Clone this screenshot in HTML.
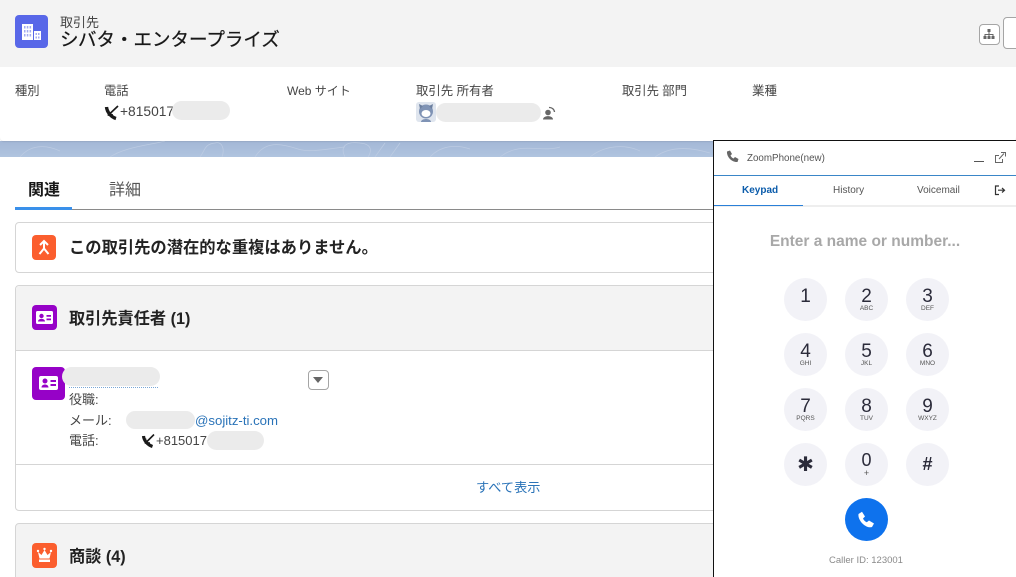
<!DOCTYPE html>
<html lang="ja"><head><meta charset="utf-8">
<style>
html,body{margin:0;padding:0;width:1016px;height:577px;overflow:hidden;background:#fff}
body{font-family:"Liberation Sans","Noto Sans CJK JP",sans-serif;color:#444;position:relative}
.a{position:absolute;white-space:nowrap}
.blur{position:absolute;background:#ebebeb;border-radius:11px}
.key{position:absolute;width:43px;height:43px;border-radius:50%;background:#f2f2f7;text-align:center;color:#2b2b3a}
.key .n{position:absolute;left:0;right:0;top:9px;font-size:19px;line-height:22px}
.key .s{position:absolute;left:0;right:0;top:27px;font-size:6.500px;line-height:7px;color:#555}
.ic{position:absolute;border-radius:4px}
.l{font-size:12.300px;line-height:18px}
</style></head><body>
<!-- header -->
<div class="a" style="left:0;top:0;width:1016px;height:67px;background:#f3f3f3"></div>
<div class="a" style="left:0;top:141px;width:1016px;height:16px;background:linear-gradient(#a3b7d6,#b0c4df)"></div>
<svg class="a" style="left:0;top:141px" width="714" height="16" fill="none" stroke="#bccbe2" stroke-width=".8"><path d="M20 16C30 4 45 3 60 10M110 16C125 6 150 4 165 0M200 16C205 10 204 3 215 2C222 0 225 8 222 16M255 16C265 0 280 2 298 8C310 12 325 8 345 6M345 16C340 6 345 0 360 2C372 3 372 10 368 16M375 16L385 2M390 16L400 2M430 16C440 5 455 3 470 8M500 16C520 0 540 12 560 6M590 16C605 4 625 3 640 10M655 16C670 5 690 6 710 12"/></svg>
<div class="a" style="left:0;top:67px;width:1016px;height:74px;background:#fff;border-radius:0 0 4px 4px;box-shadow:0 1px 1px rgba(0,0,0,.08)"></div>
<div class="ic" style="left:15px;top:15px;width:33px;height:33px;background:#5867e8"></div>
<svg class="a" style="left:21px;top:23px" width="21" height="18" fill="#fff"><path d="M1 1h11v16H1zM13 8h7v9h-7z"/><path fill="#a3abf1" d="M3 3h1.500v2.500H3zM5.800 3h1.500v2.500H5.800zM8.600 3h1.500v2.500H8.600zM3 7h1.500v2.500H3zM5.800 7h1.500v2.500H5.800zM8.600 7h1.500v2.500H8.600zM3 11h1.500v2.500H3zM5.800 11h1.500v2.500H5.800zM8.600 11h1.500v2.500H8.600zM14.500 10h1.500v2H14.500zM17 10h1.500v2H17zM14.500 13.500h1.500v2H14.500zM17 13.500h1.500v2H17z"/></svg>
<div class="a" style="left:60px;top:14px;font-size:13px;line-height:18px;color:#444">取引先</div>
<div class="a" style="left:60px;top:27px;font-size:18.500px;line-height:26px;color:#181818;-webkit-text-stroke:.25px #181818">シバタ・エンタープライズ</div>
<div class="a" style="left:979px;top:24px;width:19px;height:19px;border:1px solid #a5a5a5;border-radius:4px;background:#fff"></div>
<svg class="a" style="left:982px;top:28px" width="14" height="13" fill="#666"><path d="M5.500 1h3v3h-3zM1.500 8h3v3h-3zM5.500 8h3v3h-3zM9.500 8h3v3h-3z"/><path d="M6.500 4h1v2h4v2h-1V7H7.500v1h-1V7H3.500v1h-1V6h4z"/></svg>
<div class="a" style="left:1003px;top:17px;width:20px;height:30px;border:1px solid #a5a5a5;border-radius:4px;background:#fff"></div>
<!-- highlights -->
<div class="a l" style="left:15px;top:82px">種別</div>
<div class="a l" style="left:104px;top:82px">電話</div>
<svg class="a" style="left:104px;top:105px" width="15" height="16" fill="none" stroke="#1a1a1a"><path d="M2.500 2C3 7 7 12 12 13.500" stroke-width="3.400"/><path d="M14 1L5 9.500M4.500 5.500v4.500h4.500" stroke-width="1.700"/></svg>
<div class="a" style="left:120px;top:102px;font-size:13.800px;line-height:19px">+815017</div>
<div class="blur" style="left:172px;top:101px;width:58px;height:19px"></div>
<div class="a" style="left:287px;top:82px;font-size:12px;line-height:18px">Web サイト</div>
<div class="a l" style="left:416px;top:82px;font-size:12.400px">取引先 所有者</div>
<div class="a" style="left:416px;top:102px;width:20px;height:20px;background:#dfe5ee;border-radius:3px"></div>
<svg class="a" style="left:416px;top:102px" width="20" height="20"><circle cx="10" cy="9.500" r="7" fill="#7f93b5"/><path d="M3 2l1 5 3-3zM17 2l-1 5-3-3z" fill="#6b7f9f"/><ellipse cx="10" cy="11.500" rx="4.500" ry="3.500" fill="#fff"/><path d="M5 20c0-4 10-4 10 0z" fill="#7f93b5"/></svg>
<div class="blur" style="left:436px;top:103px;width:105px;height:19px"></div>
<svg class="a" style="left:542px;top:106px" width="14" height="14" fill="#666"><circle cx="6" cy="6.500" r="2.800"/><path d="M1 13.500c0-4.500 10-4.500 10 0z"/><path d="M7 1.500a5 5 0 0 1 5.500 4.500" fill="none" stroke="#666" stroke-width="1.300"/></svg>
<div class="a l" style="left:622px;top:82px">取引先 部門</div>
<div class="a l" style="left:752px;top:82px;font-size:12.500px">業種</div>
<!-- tabs -->
<div class="a" style="left:28px;top:180px;font-size:16px;line-height:22px;color:#181818;font-weight:bold">関連</div>
<div class="a" style="left:109px;top:180px;font-size:16px;line-height:22px;color:#555">詳細</div>
<div class="a" style="left:15px;top:209px;width:700px;height:1px;background:#8a8a8a"></div>
<div class="a" style="left:15px;top:207px;width:57px;height:3px;background:#3a90ea"></div>
<!-- duplicates card -->
<div class="a" style="left:15px;top:222px;width:705px;height:49px;border:1px solid #d5d5d5;border-radius:4px;background:#fff"></div>
<div class="ic" style="left:32px;top:235px;width:24px;height:25px;background:#fb5e2e"></div>
<svg class="a" style="left:36px;top:239px" width="16" height="17" fill="none" stroke="#fff" stroke-width="2"><path d="M4 6l4-4 4 4M8 3v7M8 9.500L3.500 15M8 9.500l4.500 5.500"/></svg>
<div class="a" style="left:69px;top:237px;font-size:16.300px;line-height:22px;color:#222;font-weight:bold">この取引先の潜在的な重複はありません。</div>
<!-- contacts card -->
<div class="a" style="left:15px;top:285px;width:705px;height:224px;border:1px solid #d5d5d5;border-radius:4px;background:#fff"></div>
<div class="a" style="left:16px;top:286px;width:700px;height:64px;background:#f3f3f3;border-bottom:1px solid #d5d5d5;border-radius:4px 4px 0 0"></div>
<div class="ic" style="left:32px;top:305px;width:25px;height:25px;background:#9602c7"></div>
<svg class="a" style="left:36px;top:311px" width="17" height="13"><rect width="17" height="13" rx="1.500" fill="#fff"/><circle cx="5.500" cy="5" r="2.200" fill="#9602c7"/><path d="M2 10.500c0-3.500 7-3.500 7 0zM10.500 4h4.500v1.800h-4.500zM10.500 7.500h4.500v1.800h-4.500z" fill="#9602c7"/></svg>
<div class="a" style="left:69px;top:309px;font-size:16.200px;line-height:21px;color:#222;font-weight:bold">取引先責任者 (1)</div>
<div class="ic" style="left:32px;top:367px;width:33px;height:33px;background:#9602c7"></div>
<svg class="a" style="left:39px;top:376px" width="19" height="15"><rect width="19" height="14" rx="2" fill="#fff"/><circle cx="6" cy="5" r="2.500" fill="#9602c7"/><path d="M2.500 11.500c0-4 7-4 7 0zM11.500 4h5.500v2h-5.500zM11.500 8h5.500v2h-5.500z" fill="#9602c7"/></svg>
<div class="a" style="left:69px;top:386px;width:89px;height:1px;border-bottom:1px dotted #7aa7d6"></div>
<div class="blur" style="left:62px;top:367px;width:98px;height:19px"></div>
<div class="a" style="left:308px;top:370px;width:19px;height:18px;border:1px solid #a5a5a5;border-radius:4px;background:#fff"></div>
<div class="a" style="left:313px;top:377px;width:0;height:0;border-left:5px solid transparent;border-right:5px solid transparent;border-top:6px solid #666"></div>
<div class="a l" style="left:69px;top:391px;font-size:13px">役職:</div>
<div class="a l" style="left:69px;top:412px;font-size:13px">メール:</div>
<div class="blur" style="left:126px;top:411px;width:69px;height:18px"></div>
<div class="a" style="left:195px;top:412px;font-size:13.200px;line-height:18px;color:#2a73b8">@sojitz-ti.com</div>
<div class="a l" style="left:69px;top:432px;font-size:13px">電話:</div>
<svg class="a" style="left:141px;top:434px" width="14" height="15" fill="none" stroke="#1a1a1a"><path d="M2.500 2C3 7 7 11 11.500 12.500" stroke-width="3.200"/><path d="M13 .5L5 8.500M4.500 4.500v4.500h4.500" stroke-width="1.600"/></svg>
<div class="a" style="left:156px;top:432px;font-size:13px;line-height:18px">+815017</div>
<div class="blur" style="left:207px;top:431px;width:57px;height:19px"></div>
<div class="a" style="left:16px;top:464px;width:700px;height:1px;background:#d5d5d5"></div>
<div class="a" style="left:476px;top:479px;font-size:13.200px;line-height:18px;color:#2a73b8">すべて表示</div>
<!-- opportunities card -->
<div class="a" style="left:15px;top:523px;width:705px;height:60px;border:1px solid #d5d5d5;border-radius:4px;background:#f3f3f3"></div>
<div class="ic" style="left:32px;top:543px;width:25px;height:25px;background:#fb5e2e"></div>
<svg class="a" style="left:36px;top:547px" width="17" height="17" fill="#fff"><path d="M2 5l3.500 3L8.500 3l3 5L15 5l-1.500 6.500h-10z"/><rect x="3" y="12.500" width="11" height="2.500"/><circle cx="2" cy="4" r="1.200"/><circle cx="8.500" cy="2" r="1.200"/><circle cx="15" cy="4" r="1.200"/></svg>
<div class="a" style="left:69px;top:547px;font-size:16.200px;line-height:21px;color:#222;font-weight:bold">商談 (4)</div>
<!-- softphone -->
<div class="a" style="left:713px;top:140px;width:303px;height:437px;background:#fff;border-left:1px solid #111;border-top:1px solid #111;box-sizing:border-box"></div>
<svg class="a" style="left:726px;top:150px" width="13" height="13" fill="#666"><path d="M1 1.500L4 .5 6 4 4.500 5.500c.7 1.500 1.700 2.500 3 3L9 7l3.500 2-1 3C6 12.500.5 7 1 1.500z"/></svg>
<div class="a" style="left:747px;top:152px;font-size:9.800px;line-height:14px;color:#555">ZoomPhone(new)</div>
<div class="a" style="left:974px;top:161px;width:10px;height:1px;background:#555"></div>
<svg class="a" style="left:994px;top:152px" width="12" height="12" fill="none" stroke="#666"><path d="M5 3.500H1.500v7h7V7M5 7l5-5.500M7 .5h4.500V4.500"/></svg>
<div class="a" style="left:714px;top:175px;width:302px;height:1px;background:#3a86c8"></div>
<div class="a" style="left:714px;top:205px;width:302px;height:2px;background:#eee"></div>
<div class="a" style="left:714px;top:205px;width:89px;height:1px;background:#2a80d8"></div>
<div class="a" style="left:742px;top:184px;font-size:10px;line-height:14px;color:#0b5cab;font-weight:bold">Keypad</div>
<div class="a" style="left:833px;top:184px;font-size:10px;line-height:14px;color:#555">History</div>
<div class="a" style="left:917px;top:184px;font-size:10px;line-height:14px;color:#555">Voicemail</div>
<svg class="a" style="left:994px;top:185px" width="12" height="11" fill="none" stroke="#333" stroke-width="1.200"><path d="M5 1H1.500v8.500H5M4 5.200h6.500M8 3l2.500 2.200L8 7.500"/></svg>
<div class="a" style="left:714px;top:232px;width:302px;text-align:center;font-size:15.500px;line-height:19px;color:#a8a8a8;font-weight:bold">Enter a name or number...</div>
<div class="key" style="left:784px;top:278px"><div class="n" style="top:8px">1</div></div>
<div class="key" style="left:845px;top:278px"><div class="n" style="top:8px">2</div><div class="s">ABC</div></div>
<div class="key" style="left:906px;top:278px"><div class="n" style="top:8px">3</div><div class="s">DEF</div></div>
<div class="key" style="left:784px;top:333px"><div class="n" style="top:8px">4</div><div class="s">GHI</div></div>
<div class="key" style="left:845px;top:333px"><div class="n" style="top:8px">5</div><div class="s">JKL</div></div>
<div class="key" style="left:906px;top:333px"><div class="n" style="top:8px">6</div><div class="s">MNO</div></div>
<div class="key" style="left:784px;top:388px"><div class="n" style="top:8px">7</div><div class="s">PQRS</div></div>
<div class="key" style="left:845px;top:388px"><div class="n" style="top:8px">8</div><div class="s">TUV</div></div>
<div class="key" style="left:906px;top:388px"><div class="n" style="top:8px">9</div><div class="s">WXYZ</div></div>
<div class="key" style="left:784px;top:443px"><div class="n" style="top:10px;font-size:20px;font-family:'DejaVu Sans',sans-serif">✱</div></div>
<div class="key" style="left:845px;top:443px"><div class="n" style="top:6px;font-size:18px">0</div><div class="s" style="top:27px;font-size:9px">+</div></div>
<div class="key" style="left:906px;top:443px"><div class="n" style="top:10px;font-size:18px;font-weight:bold">#</div></div>
<div class="a" style="left:845px;top:498px;width:43px;height:43px;border-radius:50%;background:#0e72ed"></div>
<svg class="a" style="left:857px;top:511px" width="18" height="18" fill="#fff"><path d="M1.500 3L5 .8 8 5.500 6 7.500c.8 1.800 2 3 3.800 3.800L12 9.500l5 3-2 3.500C9 18 .5 9.500 1.500 3z"/></svg>
<div class="a" style="left:714px;top:554px;width:302px;text-align:center;font-size:9.500px;line-height:14px;color:#8a8a8a;text-indent:2px">Caller ID: 123001</div>
</body></html>
